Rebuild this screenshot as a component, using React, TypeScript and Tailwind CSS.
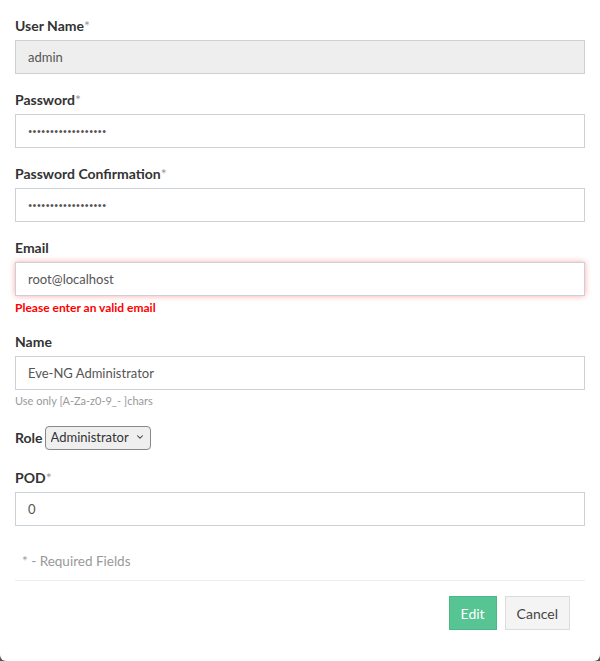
import { ChevronDown } from "lucide-react";

const FONT = { fontFamily: "Lato, 'Open Sans', sans-serif" };

function Label({ text, required }: { text: string; required?: boolean }) {
  return (
    <label className="block text-[14px] leading-[18px] font-bold text-[#333] mb-[5px]">
      {text}
      {required && <span className="font-normal text-[#999]">*</span>}
    </label>
  );
}

function TextInput({
  value,
  type = "text",
  disabled,
  invalid,
}: {
  value: string;
  type?: string;
  disabled?: boolean;
  invalid?: boolean;
}) {
  const isPassword = type === "password";
  return (
    <input
      type={type}
      defaultValue={value}
      disabled={disabled}
      className={
        "block w-full h-[34px] px-[12px] text-[#555] border border-[#ccd0d7] outline-none " +
        (isPassword ? "text-[7.5px] " : "text-[13px] ") +
        (disabled ? "bg-[#eeeeee] " : "bg-white ") +
        (invalid ? "shadow-[0_0_6px_rgba(255,0,0,0.35)]" : "")
      }
      style={FONT}
    />
  );
}

export default function App() {
  return (
    <div className="h-[661px] bg-[#555]" style={FONT}>
      <div className="h-full bg-white rounded-b-[6px] px-[15px] pt-[17px] flex flex-col">
        <div className="mb-[17px]">
          <Label text="User Name" required />
          <TextInput value="admin" disabled />
        </div>
        <div className="mb-[17px]">
          <Label text="Password" required />
          <TextInput value="eve-ng-admin-pass1" type="password" />
        </div>
        <div className="mb-[17px]">
          <Label text="Password Confirmation" required />
          <TextInput value="eve-ng-admin-pass1" type="password" />
        </div>
        <div className="mb-[17px]">
          <Label text="Email" />
          <TextInput value="root@localhost" invalid />
          <div className="mt-[4px] text-[12px] leading-[16px] font-bold text-[#ff0000]">
            Please enter an valid email
          </div>
        </div>
        <div className="mb-[16px]">
          <Label text="Name" />
          <TextInput value="Eve-NG Administrator" />
          <div className="mt-[3px] text-[11px] leading-[16px] text-[#999]">
            Use only [A-Za-z0-9_- ]chars
          </div>
        </div>
        <div className="flex items-center gap-[2px] mb-[20px] h-[24px]">
          <span className="text-[14px] font-bold text-[#333]">Role</span>
          <div className="relative">
            <select
              defaultValue="admin"
              className="appearance-none h-[24px] pl-[5px] pr-[20px] text-[13px] text-[#333] bg-[#efefef] border border-[#888] rounded-[4px] outline-none"
              style={FONT}
            >
              <option value="admin">Administrator</option>
              <option value="editor">Editor</option>
              <option value="user">User</option>
            </select>
            <ChevronDown
              className="absolute right-[6px] top-[8px] w-[10px] h-[10px] text-[#333] pointer-events-none"
              strokeWidth={2.5}
            />
          </div>
        </div>
        <div className="mb-[26px]">
          <Label text="POD" required />
          <TextInput value="0" />
        </div>
        <div className="pl-[7px] text-[13.5px] leading-[18px] text-[#999]">
          * - Required Fields
        </div>
        <div className="mt-[10px] border-t border-[#eee]" />
        <div className="flex justify-end gap-[8px] pt-[15px] pr-[15px]">
          <button className="h-[34px] px-[11px] text-[14px] text-white bg-[#57c493] border border-[#4cb885]">
            Edit
          </button>
          <button className="h-[34px] px-[11px] text-[14px] text-[#444] bg-[#f4f4f4] border border-[#dcdcdc]">
            Cancel
          </button>
        </div>
      </div>
    </div>
  );
}
